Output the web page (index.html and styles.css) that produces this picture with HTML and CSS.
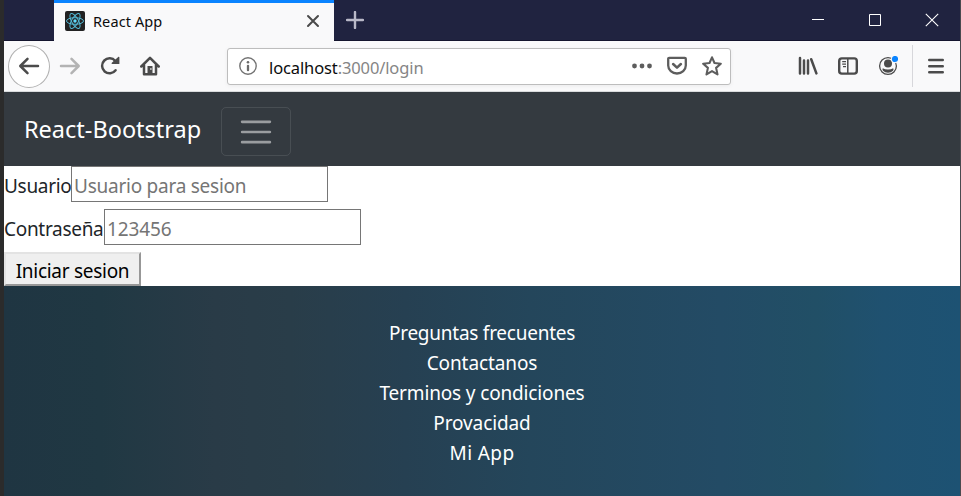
FILE: index.html
```html
<!DOCTYPE html>
<html lang="es">
<head>
<meta charset="utf-8">
<title>React App</title>
<link rel="stylesheet" href="styles.css">
</head>
<body>
<div class="window">
  <header class="tabbar">
    <div class="tab">
      <svg class="favicon" width="20" height="20" viewBox="0 0 20 20"><rect width="20" height="20" rx="2" fill="#222"/><g fill="none" stroke="#53b9d5" stroke-width="1"><ellipse cx="10" cy="10" rx="8.5" ry="3.3"/><ellipse cx="10" cy="10" rx="8.5" ry="3.3" transform="rotate(60 10 10)"/><ellipse cx="10" cy="10" rx="8.5" ry="3.3" transform="rotate(120 10 10)"/></g><circle cx="10" cy="10" r="1.7" fill="#61dafb"/></svg>
      <span class="tab-title">React App</span>
      <svg class="tab-close" width="14" height="14" viewBox="0 0 14 14"><path d="M2 2l10 10M12 2L2 12" stroke="#4a4a4a" stroke-width="2" stroke-linecap="round"/></svg>
    </div>
    <svg class="new-tab" width="18" height="18" viewBox="0 0 18 18"><path d="M9 1v16M1 9h16" stroke="#b9b9c8" stroke-width="2.4" stroke-linecap="round"/></svg>
    <div class="controls">
      <svg width="14" height="14" viewBox="0 0 14 14"><path d="M1 6.5h12" stroke="#fff"/></svg>
      <svg width="14" height="14" viewBox="0 0 14 14"><path d="M1.5 1.5h11v11h-11z" fill="none" stroke="#fff"/></svg>
      <svg width="14" height="14" viewBox="0 0 14 14"><path d="M.8.8l12.400 12.400M13.200.8L.8 13.200" stroke="#fff" stroke-width="1.1"/></svg>
    </div>
  </header>
  <div class="toolbar">
    <div class="back"><svg width="22" height="20" viewBox="0 0 22 20"><path d="M20 10H2.500M9.500 2.800L2.300 10l7.200 7.200" fill="none" stroke="#4b4b4b" stroke-width="2.500" stroke-linecap="round" stroke-linejoin="round"/></svg></div>
    <svg class="forward" width="22" height="20" viewBox="0 0 22 20"><path d="M2 10h17.500M12.500 2.800l7.200 7.200-7.200 7.200" fill="none" stroke="#b3b3b3" stroke-width="2.500" stroke-linecap="round" stroke-linejoin="round"/></svg>
    <svg class="reload" width="20" height="20" viewBox="0 0 20 20"><path d="M15.600 14.300A7.500 7.500 0 1 1 15.300 5" fill="none" stroke="#4b4b4b" stroke-width="2.500" stroke-linecap="round"/><path d="M18.200 1.100c.6-.5 1.200-.2 1.200.5v6.300H12.300c-.8 0-1.100-.7-.5-1.200z" fill="#4b4b4b"/></svg>
    <svg class="home" width="20" height="20" viewBox="0 0 20 20"><path d="M1.300 10.500L10 1.800l8.700 8.700M4 9v9.300h12V9" fill="none" stroke="#4b4b4b" stroke-width="2.500" stroke-linecap="round" stroke-linejoin="round"/><path d="M7.500 10h5v8h-5z" fill="#4b4b4b"/><path d="M10.300 12h1.200v2h-1.200z" fill="#ddd"/></svg>
    <div class="urlbar">
      <svg class="info" width="18" height="18" viewBox="0 0 18 18"><circle cx="9" cy="9" r="8.200" fill="none" stroke="#737373" stroke-width="1.400"/><circle cx="9" cy="5.200" r="1.300" fill="#6a6a6a"/><path d="M9 8.800v4.400" stroke="#6a6a6a" stroke-width="2.300" stroke-linecap="round"/></svg>
      <span class="url"><b>localhost</b>:3000/login</span>
      <svg class="dots" width="22" height="20" viewBox="0 0 22 20"><g fill="#5d5d5d"><circle cx="3.500" cy="10" r="2.400"/><circle cx="11" cy="10" r="2.400"/><circle cx="18.500" cy="10" r="2.400"/></g></svg>
      <svg class="pocket" width="20" height="20" viewBox="0 0 20 20"><path d="M1.200 2.800q0-1 1-1h15.600q1 0 1 1v6.700a8.800 8 0 0 1-17.600 0z" fill="none" stroke="#5d5d5d" stroke-width="2.300"/><path d="M6.100 8L10 11.700 13.900 8" fill="none" stroke="#5d5d5d" stroke-width="2.500" stroke-linecap="round" stroke-linejoin="round"/></svg>
      <svg class="star" width="20" height="20" viewBox="0 0 20 20"><path d="M10 1.300l2.500 5.700 6.300.7-4.700 4.200 1.400 6.500L10 15.100l-5.500 3.300 1.400-6.500L1.200 7.700 7.500 7z" fill="none" stroke="#5d5d5d" stroke-width="2.100" stroke-linejoin="round"/></svg>
    </div>
    <div class="tools">
      <svg width="20" height="20" viewBox="0 0 20 20"><path d="M2 2v15.500M6 4.500v13M10 4.500v13M13.200 3.200l5.200 14.200" stroke="#4b4b4b" stroke-width="2.500" stroke-linecap="round"/></svg>
      <svg width="20" height="20" viewBox="0 0 20 20"><rect x="1.200" y="2.400" width="17.600" height="15.200" rx="2.600" fill="none" stroke="#4b4b4b" stroke-width="2.400"/><path d="M9.800 2.500v15" stroke="#4b4b4b" stroke-width="1.500"/><path d="M4.200 5.600H8M4.200 8.100H8M5 10.600h3" stroke="#4b4b4b" stroke-width="1.100"/></svg>
      <svg width="20" height="20" viewBox="0 0 20 20"><circle cx="10" cy="10" r="8.400" fill="none" stroke="#4b4b4b" stroke-width="1.300"/><circle cx="10" cy="7.400" r="4" fill="#4b4b4b"/><path d="M4.800 12.200q2 1.200 5.200 1.200t5.200-1.200q.8 1.200-.2 2.500-2 2-5 2t-5-2q-1-1.300-.2-2.500z" fill="#4b4b4b"/><circle cx="17" cy="3" r="4" fill="#f9f9fa"/><circle cx="17" cy="3" r="3.100" fill="#0a84ff"/></svg>
    </div>
    <svg class="menu" width="16" height="18" viewBox="0 0 16 18"><path d="M1.200 3h13.600M1.200 9.200h13.600M1.200 15.300h13.600" stroke="#4b4b4b" stroke-width="2.400" stroke-linecap="round"/></svg>
  </div>
  <nav class="navbar">
    <a class="brand">React-Bootstrap</a>
    <button class="toggler" aria-label="Toggle navigation"><svg width="38" height="38" viewBox="0 0 30 30"><path stroke="rgba(255,255,255,.5)" stroke-linecap="round" stroke-miterlimit="10" stroke-width="2" d="M4 7h22M4 15h22M4 23h22"/></svg></button>
  </nav>
  <main class="form">
    <div class="row"><label class="user-label" for="user">Usuario</label><input id="user" class="user" type="text" placeholder="Usuario para sesion"></div>
    <div class="row"><label class="pass-label" for="pass">Contraseña</label><input id="pass" class="pass" type="text" placeholder="123456"></div>
    <button class="submit">Iniciar sesion</button>
  </main>
  <footer class="footer">
    <a class="faq">Preguntas frecuentes</a>
    <a class="contact">Contactanos</a>
    <a class="terms">Terminos y condiciones</a>
    <a class="privacy">Provacidad</a>
    <a class="app">Mi App</a>
  </footer>
</div>
</body>
</html>
```
FILE: styles.css
```css
* { box-sizing: border-box; }
body { margin: 0; overflow: hidden; font-family: "Noto Sans", sans-serif; font-size: 19px; color: #212529; }
svg { display: block; flex: none; }
.window { height: 496px; border-left: 4px solid #2b2b2b; border-right: 1px solid #4a4a4f; display: flex; flex-direction: column; }
.tabbar { height: 41px; flex: none; background: #202340; border-bottom: 1px solid #14152e; display: flex; align-items: flex-start; padding-left: 50px; }
.tab { width: 280px; height: 41px; background: #f9f9fa; border-top: 3px solid #0a84ff; display: flex; align-items: center; padding: 0 14px 2px 11px; }
.tab-title { margin: -1px 0 0 8px; font-size: 14.500px; letter-spacing: .1px; line-height: 20px; color: #0c0c0d; white-space: nowrap; }
.tab-close { margin-left: auto; }
.new-tab { margin: 11px 0 0 12px; }
.controls { margin: 13px 21px 0 auto; display: flex; gap: 43px; }
.toolbar { height: 51px; flex: none; background: #f9f9fa; border-bottom: 1px solid #d9dbdd; display: flex; align-items: center; padding-left: 4px; }
.back { width: 42px; height: 43px; flex: none; border: 1px solid #b1b1b1; border-radius: 50%; background: #fff; display: flex; align-items: center; justify-content: center; }
.forward { margin-left: 9px; }
.reload { margin-left: 19px; }
.home { margin-left: 20px; }
.urlbar { width: 504px; height: 37px; flex: none; margin-left: 67px; background: #fff; border: 1px solid #bdbdbd; border-radius: 3px; box-shadow: 0 1px 4px rgba(0,0,0,.06); display: flex; align-items: center; padding: 0 8px 0 11px; }
.url { margin: 2px auto 0 12px; font-size: 16.500px; letter-spacing: -.12px; color: #858585; white-space: nowrap; }
.url b { font-weight: 400; color: #0c0c0d; }
.pocket, .star { margin-left: 15px; }
.dots { margin-right: -1px; }
.tools { display: flex; gap: 20px; height: 42px; align-items: center; margin-left: 67px; padding-right: 14px; border-right: 1px solid #d7d7db; }
.menu { margin-left: 15px; }
.navbar { height: 74px; flex: none; background: #343a40; display: flex; align-items: flex-start; padding: 15px 20px 0; }
.brand { width: 177px; font-size: 23.500px; line-height: 38px; margin-top: 3px; color: #fff; white-space: nowrap; }
.toggler { width: 70px; height: 49px; margin-left: 20px; border: 1px solid rgba(255,255,255,.1); border-radius: 5px; background: none; padding: 0; display: flex; align-items: center; justify-content: center; }
.form { height: 120px; flex: none; background: #fff; }
.row { height: 43px; display: flex; align-items: flex-start; }
label { line-height: 41px; letter-spacing: -.3px; white-space: nowrap; }
.user-label { width: 67px; }
.pass-label { width: 100px; }
input { width: 257px; height: 36px; border: 1px solid #767676; border-radius: 0; padding: 3px 2px 0; font: inherit; letter-spacing: -.25px; background: #fff; }
.pass { letter-spacing: -.1px; }
input::placeholder { color: #757575; opacity: 1; }
.submit { display: block; width: 137px; height: 34px; padding: 3px 0 0; font: inherit; letter-spacing: -.28px; line-height: 28px; color: #000; background: #efefef; border: 2px solid; border-color: #e3e3e3 #979797 #979797 #e3e3e3; white-space: nowrap; }
.footer { flex: 1; background: linear-gradient(90deg, #1f3542 0%, #203843 10%, #293b47 22%, #293d49 30%, #264052 42%, #24465b 55%, #234b65 75%, #214f66 85%, #1f5170 92%, #1d5273 100%); color: #fff; display: flex; flex-direction: column; align-items: center; padding-top: 32px; line-height: 30px; }
.faq { letter-spacing: -.25px; }
.contact, .privacy { letter-spacing: -.1px; }
.terms { letter-spacing: -.15px; }
.app { letter-spacing: .4px; }
```
